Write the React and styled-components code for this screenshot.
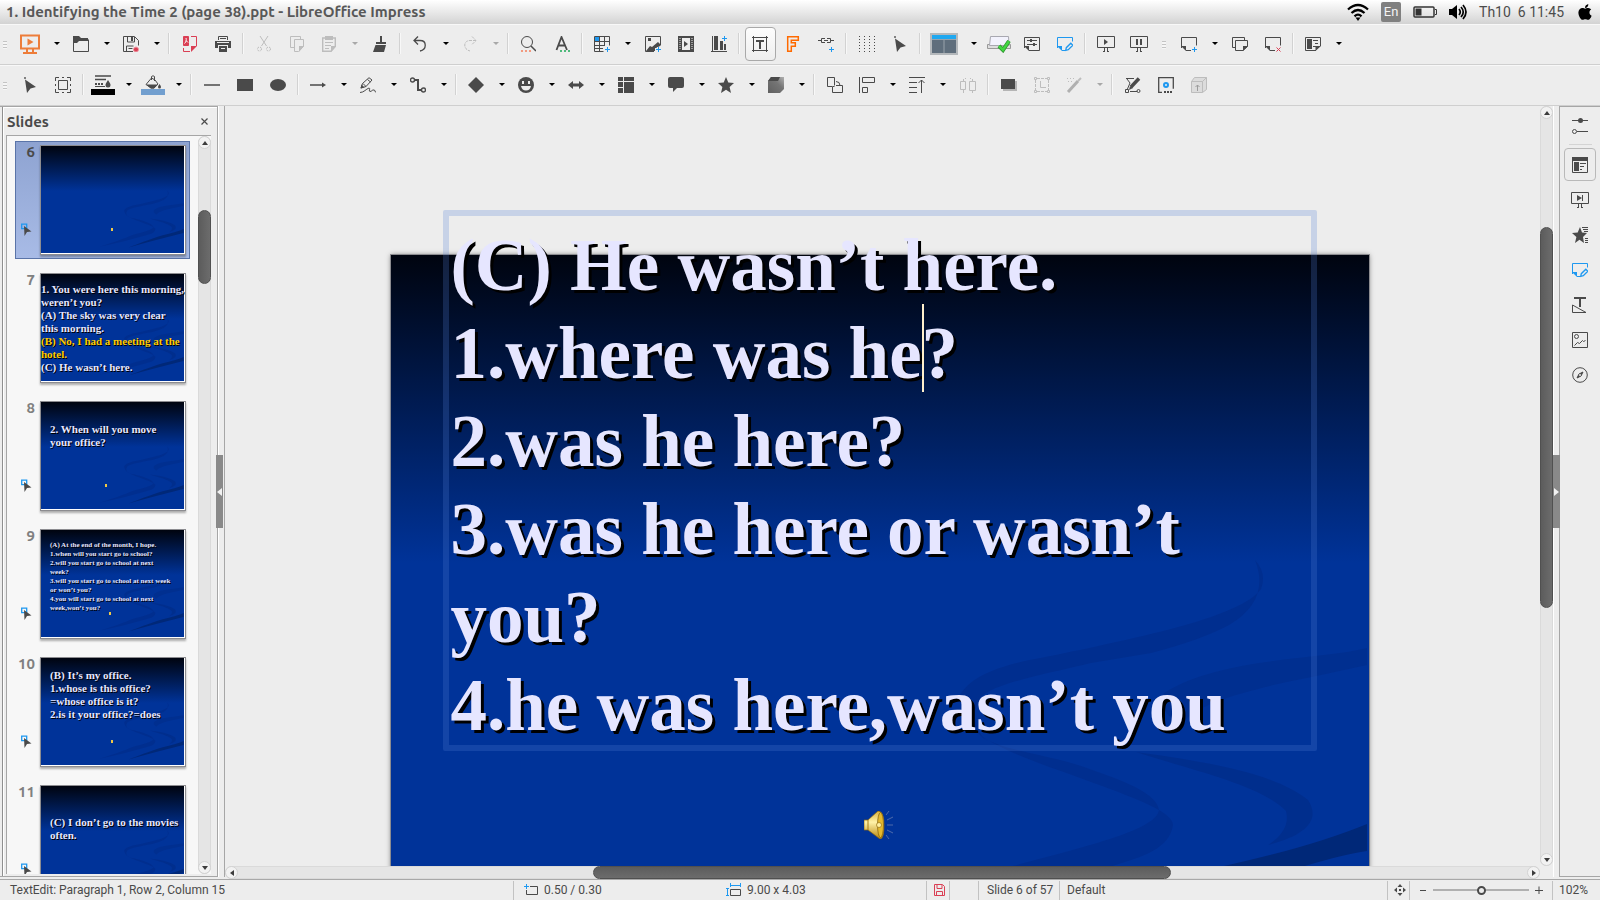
import React from 'react';
import styled, { createGlobalStyle, css } from 'styled-components';
import { FaApple } from 'react-icons/fa';

const D = '#4a4a4a';
const B = '#1e98f0';
const G = '#bdbdbd';
const UI = '"Ubuntu", "Noto Sans", "Open Sans", sans-serif';
const NARROW = '"Ubuntu Condensed", "Roboto", sans-serif';

const Global = createGlobalStyle`
  * { box-sizing: border-box; }
  body { margin: 0; background: #ededed; font-family: ${UI}; color: ${D}; overflow: hidden; }
  button { font: inherit; color: inherit; background: none; border: 0; padding: 0; margin: 0; }
`;

const Window = styled.div`
  display: flex;
  flex-direction: column;
  height: 100vh;
  background: #ededed;
`;

/* ---------- title bar ---------- */
const TitleBar = styled.header`
  display: flex;
  align-items: center;
  justify-content: space-between;
  flex: none;
  height: 24px;
  padding: 0 6px;
  background: linear-gradient(#fff, #d3d3d3);
`;
const Title = styled.h1`
  margin: 0;
  font-size: 15px;
  line-height: 24px;
  font-weight: 700;
  white-space: nowrap;
  color: #585858;
`;
const Tray = styled.div`
  display: flex;
  align-items: center;
  gap: 12px;
  color: #000;
`;
const Lang = styled.span`
  width: 20px;
  height: 20px;
  border-radius: 2px;
  background: #808080;
  color: #f4f4f4;
  font: 13px/20px ${NARROW};
  text-align: center;
`;
const Clock = styled.time`
  font: 14px/24px ${NARROW};
  color: #4c4c4c;
  white-space: pre;
`;

/* ---------- tool bars ---------- */
const Bar = styled.div`
  display: flex;
  align-items: flex-start;
  flex: none;
  height: 41px;
  padding-top: 2px;
  border-top: 1px solid #f8f8f8;
  border-bottom: 1px solid #cfcfcf;
  background: #ededed;
`;
const Grip = styled.span`
  flex: none;
  width: 4px;
  height: 8px;
  margin: 14px ${(p) => (p.$wide ? 7 : 6)}px 0 ${(p) => (p.$wide ? 7 : 3)}px;
  background: repeating-linear-gradient(#c4c4c4 0 1px, #f6f6f6 1px 3px);
`;
const Tool = styled.button`
  flex: none;
  display: flex;
  align-items: center;
  width: ${(p) => p.$w || 33}px;
  height: 34px;
  padding-left: ${(p) => p.$pad ?? 9}px;
  ${(p) =>
    p.$active &&
    css`
      width: 31px;
      margin: 0 0 0 2px;
      padding-left: 6px;
      border: 1px solid #a9a9a9;
      border-radius: 4px;
      background: linear-gradient(#fdfdfd, #eee);
    `}
`;
const Drop = styled.button`
  flex: none;
  width: 17px;
  height: 32px;
  display: flex;
  align-items: center;
  justify-content: center;
  &::after {
    content: '';
    border: 3px solid transparent;
    border-bottom: 0;
    border-top-color: ${(p) => (p.disabled ? '#a8a8a8' : '#000')};
  }
`;
const Sep = styled.span`
  flex: none;
  width: 2px;
  height: 21px;
  margin: 6px 3px 0;
  background: linear-gradient(90deg, #d2d2d2 50%, #f8f8f8 50%);
`;

const Svg = ({ w = 16, h = 16, children }) => (
  <svg width={w} height={h} viewBox={`0 0 ${w} ${h}`} fill="none" stroke={D} aria-hidden="true">
    {children}
  </svg>
);
const F = { stroke: 'none', fill: D };

const icons = {
  present: (
    <Svg w={20} h={20}>
      <g stroke="#ed7d3a">
        <path strokeWidth="2" d="M1 1.500h18v13H1z" />
        <path d="M7.500 4.500v7l6-3.500z" fill="#ed7d3a" stroke="none" />
        <path strokeWidth="2" d="M7 15v3M13 15v3M3 19h14" />
      </g>
    </Svg>
  ),
  open: (
    <Svg>
      <path {...F} d="M0 0h6l2 2h7v3H6L4 7H0z" />
      <path d="M.5 5v10.500h15v-12" />
    </Svg>
  ),
  save: (
    <Svg>
      <path d="M10 15.500H.5V.5h11l4 4v5M4.500 1v5h7V1M3.500 15v-5h7M5.500 12.500h4" />
      <path {...F} d="M8 1h2v4H8z" />
      <circle cx="13" cy="13.500" r="2.500" fill="#da3f54" stroke="#ee9aa5" />
    </Svg>
  ),
  pdf: (
    <Svg>
      <path stroke="#da3f54" fill="#da3f54" d="M1.500.5h5v9h-5z" />
      <path stroke="#fff" d="M2.500 7.500c2-2 2-3.500 1.500-5.500M4 4.500l2 2" />
      <path stroke="#da3f54" d="M9 .5h5.500V10M1.500 12v3.500H8" />
      <path fill="#da3f54" stroke="none" d="M9 10h6l-6 6z" />
    </Svg>
  ),
  print: (
    <Svg>
      <path d="M3.500 4V.5h9V4M5 2.500h6" />
      <path {...F} d="M0 5h16v7h-3V9H3v3H0zM4 10h8v6H4z" />
      <path stroke="#ededed" d="M2 6.500h12M6 12.500h4" />
    </Svg>
  ),
  cut: (
    <Svg>
      <g stroke={G}>
        <path d="M4 0l6.500 10M12 0L5.500 10" />
        <circle cx="3.500" cy="13" r="2" strokeDasharray="2 1" />
        <circle cx="12.500" cy="13" r="2" strokeDasharray="2 1" />
      </g>
    </Svg>
  ),
  copy: (
    <Svg>
      <path stroke={G} d="M5 11.500H1.500V.5h10v3M5.500 3.500h9v7l-5 5h-4z" />
      <path fill={G} stroke="none" d="M10 10h5l-5 6z" />
    </Svg>
  ),
  paste: (
    <Svg>
      <path stroke={G} strokeWidth="1.400" d="M1.700 2h12.600v8.500L10 15.300H1.700z" />
      <path stroke={G} d="M4 6.500h8M4 9.500h6M4 12.500h4" />
      <path fill={G} stroke="none" d="M4 0h8v4H4zM10 10h5l-5 6z" />
    </Svg>
  ),
  brush: (
    <Svg>
      <path {...F} d="M8 0h2v6H8zM4 6h10v2H4zM3.500 9h10.500l-2 7H1z" />
    </Svg>
  ),
  undo: (
    <Svg>
      <path strokeWidth="1.300" d="M6 .5L2 4.500l4 4M2 4.500h6c7 0 7 9 0 10.500" />
    </Svg>
  ),
  redo: (
    <Svg>
      <path stroke={G} strokeDasharray="3 1" d="M10 .5l4 4-4 4M14 4.500H8c-7 0-7 9 0 10.500" />
    </Svg>
  ),
  find: (
    <Svg>
      <circle cx="7" cy="6" r="5.500" />
      <path d="M11 10l5 5" strokeWidth="1.500" />
      <path stroke="#f29a80" strokeWidth="2" strokeDasharray="2 2" d="M1 15h10" />
    </Svg>
  ),
  spell: (
    <Svg>
      <path strokeWidth="1.800" d="M2.500 14L7.500 1 13 14M4 9.500h7" />
      <path stroke="#4fba7c" strokeWidth="2" strokeDasharray="2 2" d="M6 15h10" />
    </Svg>
  ),
  table: (
    <Svg>
      <path d="M.5.5h15v9M.5.5v15h9M0 5.500h16M0 9.500h10M0 12.500h9M5.500 0v16M10.500 0v10" />
      <path fill={B} stroke="none" d="M1 1h4v4H1z" />
      <path stroke={B} d="M11 13.500h5M13.500 11v5" />
    </Svg>
  ),
  image: (
    <Svg>
      <path d="M9 15.500H.5V.5h15v9" />
      <path {...F} d="M1 15l4-5 2 1 6-5 2 2v2l-4 2v3zM3 2h3v3H3z" />
      <path stroke="#ededed" strokeWidth="3" d="M10 13.500h6M13.500 11v5" />
      <path stroke={B} d="M11 13.500h5M13.500 11v5" />
    </Svg>
  ),
  film: (
    <Svg>
      <path {...F} d="M0 0h16v16H0z" />
      <path fill="#ededed" stroke="none" d="M4 2h8v12H4z" />
      <path stroke="#ededed" strokeDasharray="1 1" d="M2 2v12M14 2v12" />
      <path {...F} d="M6 5l4 3-4 3z" />
    </Svg>
  ),
  chart: (
    <Svg>
      <path {...F} d="M3 0h4v14H3zM9 5h3v9H9zM13 8h2v6h-2z" />
      <path d="M0 15.500h16M1.500 0v15" />
      <path stroke={B} d="M11 2.500h5M13.500 0v5" />
    </Svg>
  ),
  textbox: (
    <Svg>
      <path d="M0 1.500h16M0 14.500h16M1.500 0v16M14.500 0v16" />
      <path {...F} d="M4 4h8v2H9v7H7V6H4z" />
    </Svg>
  ),
  fontwork: (
    <Svg>
      <path stroke="#ff6a00" strokeWidth="1.500" d="M2.700.7h10.600v3.600H6.300v2.400h4v3.600h-4v5H2.700z" />
    </Svg>
  ),
  link: (
    <Svg>
      <path d="M0 4.500h3M13 4.500h3M7 2.500H3.500v4H7M9 2.500h3.500v4H9M6 4.500h4" />
      <path stroke={B} d="M11 13.500h5M13.500 11v5" />
    </Svg>
  ),
  grid: (
    <Svg>
      <path strokeDasharray="1 2" d="M.5 0v16M5.500 0v16M10.500 0v16M15.500 0v16" />
    </Svg>
  ),
  cursor: (
    <Svg>
      <path {...F} d="M3 2.500L14 10l-5.500 1.500L5 16z" />
      <path fill="#808080" stroke="none" d="M2 0h2v2H2z" />
    </Svg>
  ),
  view: (
    <Svg w={28} h={22}>
      <rect x="1" y="1" width="26" height="20" fill="#5f6e7c" stroke="#b4b8bb" strokeWidth="2" />
      <path fill="#1fa8f0" stroke="none" d="M2 2h24v4H2z" />
      <path stroke="#9aa3ab" d="M14 7v13M2 6.500h24" />
    </Svg>
  ),
  master: (
    <Svg w={24} h={18}>
      <path fill="#ddd" stroke="#999" d="M.5 9.500h23v4H.5z" />
      <path fill="#f2f2fc" stroke="#a8a8b0" d="M3.500 1.500h18l.5 9H2.500z" />
      <path stroke="#2c8f2c" strokeWidth="4" d="M12 11l4 4 6-9" />
      <path stroke="#41d441" strokeWidth="2.500" d="M12 11l4 4 6-9" />
    </Svg>
  ),
  props: (
    <Svg>
      <path d="M.5 12V1.500h15v13H5" />
      <path {...F} d="M0 10h5v5z" />
      <path d="M3 4.500h10M3 8.500h10" />
      <path strokeWidth="3" d="M6 4.500h2M9 8.500h2" />
    </Svg>
  ),
  edit: (
    <Svg>
      <path stroke={B} d="M.5 12V1.500h15v4M5 14.500h3" />
      <path fill={B} stroke="none" d="M0 10h5v5z" />
      <path stroke={B} strokeWidth="1.300" d="M8.700 14.300l.6-2.600 4.500-4.500 2 2-4.500 4.500z" />
    </Svg>
  ),
  show: (
    <Svg w={18}>
      <path d="M.5.5h17v11H.5zM7.500 12v3M10.500 12v3M6 15.500h2M10 15.500h2" />
      <path {...F} d="M7 3l4 3-4 3z" />
    </Svg>
  ),
  pause: (
    <Svg w={18}>
      <path d="M.5.5h17v11H.5zM7.500 12v3M10.500 12v3M6 15.500h2M10 15.500h2" />
      <path {...F} d="M6 3h2v6H6zM10 3h2v6h-2z" />
    </Svg>
  ),
  newslide: (
    <Svg>
      <path d="M.5 12V1.500h15v8M5 14.500h5" />
      <path {...F} d="M0 10h5v5z" />
      <path stroke={B} d="M11 13.500h5M13.500 11v5" />
    </Svg>
  ),
  dup: (
    <Svg>
      <path d="M4 11.500H.5v-10h12V4M3.500 4.500h12v6L11 14.500H3.500z" />
      <path {...F} d="M11 10h5l-5 5z" />
    </Svg>
  ),
  del: (
    <Svg>
      <path d="M.5 12V1.500h15v8M5 14.500h5" />
      <path {...F} d="M0 10h5v5z" />
      <path stroke="#da3f54" d="M11.500 11.500l4 4M15.500 11.500l-4 4" />
    </Svg>
  ),
  layout: (
    <Svg>
      <path d="M11 14.500H.5v-13h15V10M8 4.500h5M10 7.500h3M8 10.500h3" />
      <path {...F} d="M2 3h5v10H2zM10.500 10H16l-5.500 5z" />
    </Svg>
  ),
  select: (
    <Svg>
      <path d="M3.500 3.500h9v9h-9zM.5 4V.5H4M12 .5h3.500V4M.5 12v3.500H4M12 15.500h3.500V12M7 .5h2M7 15.500h2M.5 7v2M15.500 7v2" />
    </Svg>
  ),
  linecolor: (
    <Svg w={24} h={20}>
      <path d="M4 1h16M4 4.500h11" strokeWidth="1.300" />
      <path strokeWidth="2" strokeDasharray="2 1" d="M4 9h9" />
      <path {...F} d="M4 11h10v1H4zM17 5c2 3 2.500 4 2.500 5a2.500 2.500 0 0 1-5 0c0-1 .5-2 2.500-5z" />
      <path fill="#000" stroke="none" d="M0 14h24v6H0z" />
    </Svg>
  ),
  fillcolor: (
    <Svg w={24} h={20}>
      <path d="M10.500 5V1.500q1.500-1.500 3 0V6M10.500 3L5 9.500l5 3.500h3l4-4-3-4z" />
      <path {...F} d="M5 9.500h12l-4 4h-3zM18.500 9q1.500 2 1.500 3a1.500 1.500 0 0 1-3 0q0-1 1.500-3z" />
      <path fill="#729fcf" stroke="none" d="M0 14h24v6H0z" />
    </Svg>
  ),
  line: <Svg><path strokeWidth="1.500" d="M0 8h16" /></Svg>,
  rect: <Svg><path {...F} d="M0 2h16v12H0z" /></Svg>,
  ellipse: <Svg><ellipse {...F} cx="8" cy="8" rx="8" ry="6" /></Svg>,
  arrow: <Svg><path strokeWidth="1.500" d="M0 8h13" /><path {...F} d="M12 5.500l4 2.500-4 2.500z" /></Svg>,
  pencil: (
    <Svg>
      <path d="M1 11l1.500-4.500L9 .7 12 3 6 9.500zM3 6.500l3 3M7.500 2.500l3 2.500M0 15.500c4 0 6-3.500 9-4.500 2 0-1 3.500 1 3.500s2-2 4-1.500 0 2 2 2" />
      <path {...F} d="M.5 11.500l1-4 3 3z" />
    </Svg>
  ),
  connector: (
    <Svg>
      <path strokeWidth="2" d="M5 3h3v10h4" />
      <circle cx="2.500" cy="3" r="2" strokeWidth="1.400" /><circle cx="13.500" cy="13" r="2" strokeWidth="1.400" />
    </Svg>
  ),
  diamond: <Svg><path {...F} d="M8 0l8 8-8 8-8-8z" /></Svg>,
  smiley: (
    <Svg>
      <circle {...F} cx="8" cy="8" r="8" />
      <path fill="#ededed" stroke="none" d="M4 4h2v3H4zM10 4h2v3h-2zM3 9h10q-1 4.500-5 4.500T3 9z" />
    </Svg>
  ),
  dblarrow: <Svg><path {...F} d="M0 8l5-4v2.500h6V4l5 4-5 4V9.500H5V12z" /></Svg>,
  flow: <Svg><path {...F} d="M0 0h5v4H0zM6 0h10v4H6zM0 5h5v5H0zM6 5h10v11H6zM0 11h5v5H0z" /></Svg>,
  callout: <Svg><path {...F} d="M2 0h12q2 0 2 2v7q0 2-2 2h-5l-4 4v-4H2q-2 0-2-2V2Q0 0 2 0z" /></Svg>,
  star: <Svg><path {...F} d="M8 0l2.300 5.600 5.700.5-4.400 3.800L13 16l-5-3.300L3 16l1.400-6.100L0 6.100l5.700-.5z" /></Svg>,
  cube: (
    <Svg>
      <defs>
        <linearGradient id="cubeSide" x1="0" y1="1" x2="1" y2="0">
          <stop offset="0" stopColor="#606060" /><stop offset=".6" stopColor="#757575" /><stop offset="1" stopColor="#b0b0b0" />
        </linearGradient>
      </defs>
      <path fill="url(#cubeSide)" stroke="none" d="M0 4l3-4h13v12l-4 4H0z" />
      <path {...F} d="M0 4l3-4h9l-2 4z" />
    </Svg>
  ),
  rotate: <Svg><path d="M5 9.500H.5v-9h7v8M5.500 15.500v-6h2M9 8.500h6.500v7h-10M9 4.500q4 0 4 4" /></Svg>,
  align: <Svg><path d="M.5 0v16M3.500.5h12v5h-12zM3.500 10.500h5v5h-5z" /></Svg>,
  arrange: <Svg><path d="M0 .5h16M0 5.500h8M0 10.500h8M0 15.500h8M12.500 3v13M9.500 6l3-3 3 3" /></Svg>,
  distribute: (
    <Svg>
      <path stroke={G} d="M.5 4.500h5v8h-5zM9.500 4.500h6v9h-6zM3.500 2v2M3.500 13v3M12.500 2v2M12.500 14v2M5 1.500h1M10 1.500h1" />
    </Svg>
  ),
  shadow: <Svg><path fill="#b5b5b5" stroke="none" d="M2 4h14v10H2z" /><path {...F} d="M0 2h14v10H0z" /></Svg>,
  crop: (
    <Svg>
      <path stroke={G} strokeDasharray="3 1" d="M3 1.500h10M3 14.500h10M1.500 3v10M14.500 3v10" />
      <path stroke={G} d="M.5.500h2v2h-2zM13.500.5h2v2h-2zM.5 13.500h2v2h-2zM13.500 13.500h2v2h-2zM6.500 4v6.500H12" />
    </Svg>
  ),
  wand: (
    <Svg>
      <path stroke="#b0b0b0" strokeWidth="3" d="M2 15L12 4" />
      <path stroke={G} strokeWidth="2" d="M12 4l3-3" />
      <path stroke={G} strokeDasharray="1 2" d="M1 1.500h8M2 4.500h6" />
    </Svg>
  ),
  points: (
    <Svg>
      <path d="M1 1.500h8M2 2l3 4-3 7M5 14.500h7M.5 12.500h3v3h-3z" />
      <circle cx="13.500" cy="14" r="1.500" />
      <path strokeWidth="3.500" d="M6 10l8-8.500" />
      <path {...F} d="M4 13l1-4 3 2z" />
    </Svg>
  ),
  glue: (
    <Svg>
      <path strokeWidth="1.300" d="M4 15.300H.7V.7h14.600v11" />
      <path strokeDasharray="2 1" strokeWidth="2" d="M6 15h9" />
      <circle cx="8" cy="8" r="2" stroke={B} strokeWidth="2" />
    </Svg>
  ),
  extrude: (
    <Svg>
      <path stroke={G} fill="#dcdcdc" d="M.5 4.500l3-4h12v12l-4 3H.5zM.5 4.500h11v11M11.500 4.500l4-4" />
      <path stroke="#9c9c9c" d="M6.500 14V8M4.500 10l2-2 2 2" />
    </Svg>
  ),
  sliders: (
    <Svg>
      <path d="M0 2.500h16M5 13.500h11" />
      <circle {...F} cx="8.500" cy="2.500" r="2.500" /><circle cx="2.500" cy="13.500" r="2" />
    </Svg>
  ),
  properties: (
    <Svg>
      <path d="M.5.5h15v15H.5zM8 6.500h6M8 9.500h4M8 12.500h2" />
      <path {...F} d="M0 0h16v4H0zM2 5h5v9H2z" />
    </Svg>
  ),
  transition: (
    <Svg w={18}>
      <path d="M.5.5h17v11H.5zM7.500 12v3M10.500 12v3M6 15.500h2M10 15.500h2M11.500 3v6" />
      <path {...F} d="M6 3l5 3-5 3z" />
    </Svg>
  ),
  animation: (
    <Svg>
      <path {...F} d="M8 0l2 5.600 5 .5-4 3.800L12 16l-4.500-3.300L3 16l1.400-6.100L0 6.100l5.700-.5z" />
      <path d="M10 .5h6M11 2.500h5M12 4.500h4M13 11.500h3M13 13.500h3M13 15.500h3" />
    </Svg>
  ),
  styles: <Svg><path d="M.5 8v7.500H14z" /><path {...F} d="M2 0h12v2H9v8H7V2H2z" /></Svg>,
  gallery: (
    <Svg>
      <path d="M.5.5h15v15H.5zM2.500 13.500l3-3 2 1 3-3 1 1 2-1" />
      <circle cx="4.500" cy="4.500" r="2" />
    </Svg>
  ),
  navigator: (
    <Svg>
      <circle cx="8" cy="8" r="7.300" />
      <path d="M11 5L9 9 5 11l2-4z" fill={D} />
      <circle cx="8" cy="8" r="1" fill="#ededed" stroke="none" />
    </Svg>
  ),
};

/* ---------- panels ---------- */
const Work = styled.main`
  display: flex;
  flex: 1;
  min-height: 0;
`;
const Panel = styled.aside`
  display: flex;
  flex-direction: column;
  flex: none;
  width: 218px;
  margin-bottom: 2px;
  padding: 0 6px 2px 3px;
  border: solid #a6a6a6;
  border-width: 1px 1px 1px 0;
  box-shadow: inset 2px 0 #ededed, inset 3px 0 #8f8f8f, inset 4px 1px #fff;
`;
const PanelHead = styled.div`
  display: flex;
  align-items: center;
  justify-content: space-between;
  height: 28px;
  padding: 2px 0 0 4px;
`;
const PanelTitle = styled.h2`
  margin: 0;
  font-size: 15px;
  line-height: 20px;
`;
const Close = styled.button`
  width: 13px;
  height: 15px;
  display: flex;
  align-items: flex-start;
  justify-content: center;
  padding-top: 3px;
`;
const ListBox = styled.div`
  display: flex;
  flex: 1;
  min-height: 0;
  margin-left: 3px;
  border: solid #a6a6a6;
  border-width: 1px 0 0 1px;
  background: #f7f7f7;
`;
const List = styled.ol`
  flex: 1;
  display: flex;
  flex-direction: column;
  gap: 10px;
  min-width: 0;
  margin: 0;
  padding: 5px 8px 0;
  overflow: hidden;
  list-style: none;
`;
const Item = styled.li`
  flex: none;
  display: flex;
  height: 118px;
  padding: 3px 3px 3px 0;
  border: 1px solid ${(p) => (p.$on ? '#5a74a8' : 'transparent')};
  background: ${(p) => (p.$on ? 'linear-gradient(#8ea3d1, #a8bbe6)' : 'none')};
`;
const Gutter = styled.div`
  flex: 1;
  min-width: 0;
  display: flex;
  flex-direction: column;
  justify-content: space-between;
  align-items: flex-end;
  padding: 0 5px 19px 0;
`;
const Num = styled.span`
  font: 700 15px/14px ${UI};
  color: ${(p) => (p.$on ? '#4a4a4a' : '#808080')};
`;
const Anim = styled.span`
  align-self: flex-start;
  display: flex;
  padding-left: 5px;
`;
const Frame = styled.div`
  flex: none;
  width: 146px;
  height: 110px;
  border: 1px solid #8c8c90;
  padding: 0 1px 1px 0;
  background: #fff;
  box-shadow: 0 2px 2px rgba(0, 0, 0, 0.3);
`;
const deck = css`
  background: linear-gradient(#00040f, #003399 42%);
`;
const Mini = styled.div`
  ${deck}
  position: relative;
  height: 107px;
`;
const MiniText = styled.p`
  position: relative;
  margin: 0;
  padding: ${(p) => p.$top}px 0 0 ${(p) => p.$left}px;
  font: 700 ${(p) => (p.$small ? '7px/9px' : '11px/13px')} "Liberation Serif", serif;
  color: #e6e6ff;
  text-shadow: 1px 1px 0 #000;
  white-space: nowrap;
`;
const Line = styled.span`
  display: block;
  color: ${(p) => (p.$hot ? '#ffcc00' : 'inherit')};
`;
const Dot = styled.i`
  position: absolute;
  left: ${(p) => p.$x}px;
  top: 82px;
  width: 2px;
  height: 3px;
  background: #f0c846;
`;
const WaveSvg = styled.svg`
  position: absolute;
  inset: 0;
  width: 100%;
  height: 100%;
`;
const Waves = () => (
  <WaveSvg viewBox="0 0 978 733" preserveAspectRatio="none" aria-hidden="true">
    <g fill="#002d8c">
      <path d="M864 305Q880 345 838 370Q810 385 760 398L700 408C650 420 605 428 590 442C575 465 590 482 598 487Q574 472 569 440C585 412 640 405 665 400C750 382 850 362 870 334Q876 318 864 305z" opacity=".8" />
      <path d="M592 482C620 500 660 512 700 527C750 545 782 558 782 570C778 595 750 602 718 612L560 655L400 690Q560 640 622 611C700 590 765 575 768 555C765 535 720 522 690 511C650 498 610 495 592 482z" opacity=".8" />
      <path d="M976 393C930 405 830 402 773 438Q765 455 790 470C805 445 880 430 930 420L976 410z" opacity=".7" />
      <path d="M745 497C800 505 880 515 917 545C930 565 915 580 877 590Q900 575 895 556C870 530 800 515 745 497z" opacity=".9" />
    </g>
    <path fill="#002878" d="M976 569Q920 592 833 611C740 640 650 675 600 695Q720 660 907 613Q950 600 976 596z" />
  </WaveSvg>
);

/* ---------- scroll bars and splitters ---------- */
const Track = styled.div`
  display: flex;
  flex: none;
  flex-direction: ${(p) => (p.$h ? 'row' : 'column')};
  ${(p) => (p.$h ? 'height: 13px; margin-right: 13px;' : 'width: 13px;')}
  border-radius: 7px;
  background: #e5e5e5;
  box-shadow: inset 0 0 0 1px #dadada;
`;
const Arrow = styled.button`
  flex: none;
  width: 13px;
  height: 13px;
  border: 1px solid #d2d2d2;
  border-radius: 7px;
  background: #f2f2f2;
  display: flex;
  align-items: center;
  justify-content: center;
  &::after {
    content: '';
    border: 3px solid transparent;
    border-bottom: 4px solid #3c3c3c;
    border-top: 0;
    transform: rotate(${(p) => p.$turn}deg);
  }
`;
const Run = styled.span`
  flex: ${(p) => p.$n} 0 0;
`;
const Thumb = styled(Run)`
  border-radius: 7px;
  border: 1px solid #505050;
  background: linear-gradient(${(p) => (p.$h ? 180 : 90)}deg, #5c5c5c, #6c6c6c);
`;
const Scroll = ({ h, parts }) => (
  <Track $h={h}>
    <Arrow aria-label="Scroll back" $turn={h ? -90 : 0} />
    <Run $n={parts[0]} />
    <Thumb $h={h} $n={parts[1]} />
    <Run $n={parts[2]} />
    <Arrow aria-label="Scroll forward" $turn={h ? 90 : 180} />
  </Track>
);
const Splitter = styled.div`
  flex: none;
  display: flex;
  align-items: center;
  width: 7px;
  margin-bottom: 2px;
  border-left: 1px solid #fff;
  border-right: 1px solid #a6a6a6;
`;
const Handle = styled.button`
  && { margin-left: ${(p) => (p.$right ? -1 : -3)}px; }
  flex: none;
  width: 7px;
  height: 73px;
  display: flex;
  align-items: center;
  justify-content: center;
  background: #898989;
  &::after {
    content: '';
    border: 4px solid transparent;
    border-${(p) => (p.$right ? 'left' : 'right')}: 5px solid #f2f2f2;
    border-${(p) => (p.$right ? 'right' : 'left')}: 0;
  }
`;

/* ---------- editing canvas ---------- */
const Editor = styled.section`
  flex: 1;
  display: flex;
  flex-direction: column;
  min-width: 0;
`;
const Upper = styled.div`
  flex: 1;
  display: flex;
  min-height: 0;
`;
const Canvas = styled.div`
  flex: 1;
  min-width: 0;
  display: flex;
  justify-content: center;
  align-items: flex-start;
  padding: 149px 6px 0 0;
  overflow: hidden;
`;
const Slide = styled.div`
  ${deck}
  flex: none;
  position: relative;
  width: 978px;
  height: 733px;
  box-shadow: 0 0 0 1px #8c8c90, 0 0 5px rgba(0, 0, 0, 0.5);
`;
const TextFrame = styled.div`
  position: absolute;
  left: 52px;
  top: -45px;
  width: 874px;
  height: 541px;
  padding: 6px 0 0 2px;
  border: 6px solid rgba(82, 128, 214, 0.243);
  border-radius: 2px;
  font: 700 73px/88px "Liberation Serif", serif;
  color: #e6e6ff;
  text-shadow: 3px 3px 0 #000;
  white-space: nowrap;
`;
const Caret = styled.i`
  display: inline-block;
  width: 2px;
  height: 88px;
  margin: -6px -2px 0 0;
  vertical-align: top;
  background: #fff0cc;
`;
const Speaker = styled.svg`
  position: absolute;
  left: 473px;
  top: 556px;
`;

/* ---------- side bar ---------- */
const Side = styled.nav`
  flex: none;
  display: flex;
  flex-direction: column;
  align-items: center;
  width: 40px;
  margin-bottom: 2px;
  padding-top: 2px;
  gap: 2px;
  border: solid #a6a6a6;
  border-width: 1px 0;
`;
const SideBtn = styled.button`
  width: 32px;
  height: 33px;
  display: flex;
  align-items: center;
  justify-content: center;
  border: 1px solid ${(p) => (p.$on ? '#b9b9b9' : 'transparent')};
  border-radius: 4px;
`;
const SideRule = styled.span`
  width: 23px;
  height: 2px;
  background: linear-gradient(#d4d4d4 50%, #ededed 50%);
`;

/* ---------- status bar ---------- */
const Status = styled.footer`
  flex: none;
  display: flex;
  align-items: center;
  height: 21px;
  border-top: 1px solid #a8a8a8;
  font: 12px/20px ${NARROW};
  white-space: nowrap;
`;
const Cell = styled.div`
  display: flex;
  align-items: center;
  gap: 6px;
  flex: ${(p) => (p.$grow ? `${p.$grow} 1 ${p.$grow}px` : 'none')};
  width: ${(p) => (p.$w ? `${p.$w}px` : 'auto')};
  height: 19px;
  padding-left: ${(p) => p.$pad ?? 8}px;
  border-left: 1px solid ${(p) => (p.$bare ? 'transparent' : '#c2c2c2')};
`;
const Zoom = styled.input`
  appearance: none;
  width: 96px;
  height: 14px;
  margin: 0;
  background: linear-gradient(#b0b0b0, #b0b0b0) center / 100% 2px no-repeat;
  &::-webkit-slider-thumb {
    appearance: none;
    width: 9px;
    height: 9px;
    border: 2px solid ${D};
    border-radius: 5px;
    background: #ededed;
  }
`;

const T = (name, label, extra = {}) => ({ k: 't', name, label, ...extra });
const d = { k: 'd' };
const dOff = { k: 'd', off: true };
const s = { k: 's' };

const standard = [
  T('present', 'Templates', { w: 35, pad: 7 }), d, T('open', 'Open', { pad: 8 }), d, T('save', 'Save', { pad: 8 }), d, s,
  T('pdf', 'Export as PDF'), T('print', 'Print'), s,
  T('cut', 'Cut', { off: true }), T('copy', 'Copy', { off: true }), T('paste', 'Paste', { off: true, pad: 8 }), dOff, T('brush', 'Clone'), s,
  T('undo', 'Undo', { pad: 8 }), d, T('redo', 'Redo', { off: true, pad: 8 }), dOff, s,
  T('find', 'Find', { pad: 8 }), T('spell', 'Spelling'), s,
  T('table', 'Table', { pad: 8 }), d, T('image', 'Image'), T('film', 'Media'), T('chart', 'Chart'), s,
  T('textbox', 'Text Box', { active: true }), T('fontwork', 'Fontwork'), T('link', 'Hyperlink'), s,
  T('grid', 'Display Grid'), T('cursor', 'Helplines'), s,
  T('view', 'Display Views', { w: 41, pad: 6 }), d, T('master', 'Master Slide', { pad: 5 }), T('props', 'Master Properties'), T('edit', 'Edit Master'), s,
  T('show', 'Start from First Slide', { pad: 8 }), T('pause', 'Start from Current Slide', { pad: 8 }), { k: 'g' },
  T('newslide', 'New Slide', { pad: 8 }), d, T('dup', 'Duplicate Slide'), T('del', 'Delete Slide'), s, T('layout', 'Slide Layout', { pad: 8 }), d,
];
const drawing = [
  T('cursor', 'Select'), T('select', 'Zoom and Pan'), s,
  T('linecolor', 'Line Color', { pad: 4 }), d, T('fillcolor', 'Fill Color', { pad: 4 }), d, s,
  T('line', 'Line'), T('rect', 'Rectangle'), T('ellipse', 'Ellipse'), s,
  T('arrow', 'Lines and Arrows', { pad: 8 }), d, T('pencil', 'Curves', { pad: 8 }), d, T('connector', 'Connectors', { pad: 8 }), d, s,
  T('diamond', 'Basic Shapes', { pad: 8 }), d, T('smiley', 'Symbol Shapes', { pad: 8 }), d, T('dblarrow', 'Block Arrows', { pad: 8 }), d, T('flow', 'Flowchart', { pad: 8 }), d,
  T('callout', 'Callouts', { pad: 8 }), d, T('star', 'Stars', { pad: 8 }), d, T('cube', '3D Objects', { pad: 8 }), d, s,
  T('rotate', 'Rotate'), T('align', 'Align', { pad: 8 }), d, T('arrange', 'Arrange', { pad: 8 }), d, T('distribute', 'Distribute', { off: true }), s,
  T('shadow', 'Shadow'), T('crop', 'Crop', { off: true }), T('wand', 'Filter', { off: true, pad: 8 }), dOff, s,
  T('points', 'Points'), T('glue', 'Glue Points'), T('extrude', 'Toggle Extrusion', { off: true }),
];

const Tools = ({ items, label }) => (
  <Bar role="toolbar" aria-label={label}>
    <Grip />
    {items.map((it, i) => {
      if (it.k === 's') return <Sep key={i} />;
      if (it.k === 'g') return <Grip key={i} $wide />;
      if (it.k === 'd') return <Drop key={i} disabled={it.off} aria-label="More" />;
      return (
        <Tool key={i} $w={it.w} $pad={it.pad} $active={it.active} disabled={it.off} aria-label={it.label}>
          {icons[it.name]}
        </Tool>
      );
    })}
  </Bar>
);

const slides = [
  { n: 6, on: true, anim: true, dot: 70 },
  {
    n: 7, top: 9, left: 0,
    lines: ['1. You were here this morning,', 'weren’t you?', '(A) The sky was very clear', 'this morning.', '*(B) No, I had a meeting at the', '*hotel.', '(C) He wasn’t here.'],
  },
  { n: 8, anim: true, dot: 64, top: 21, left: 9, lines: ['2. When will you move', 'your office?'] },
  {
    n: 9, anim: true, dot: 68, top: 11, left: 9, small: true,
    lines: ['(A) At the end of the month, I hope.', '1.when will you start go to school?', '2.will you start go to school at next', 'week?', '3.will you start go to school at next week', 'or won’t you?', '4.you will start go to school at next', 'week,won’t you?'],
  },
  { n: 10, anim: true, dot: 70, top: 11, left: 9, lines: ['(B) It’s my office.', '1.whose is this office?', '=whose office is it?', '2.is it your office?=does'] },
  { n: 11, anim: true, top: 30, left: 9, lines: ['(C) I don’t go to the movies', 'often.'] },
];

const sideTabs = [
  ['properties', 'Properties'], ['transition', 'Slide Transition'], ['animation', 'Animation'], ['edit', 'Master Slides'],
  ['styles', 'Styles'], ['gallery', 'Gallery'], ['navigator', 'Navigator'],
];

export default function App() {
  return (
    <Window>
      <Global />
      <TitleBar>
        <Title>1. Identifying the Time 2 (page 38).ppt - LibreOffice Impress</Title>
        <Tray>
          <svg width="22" height="18" viewBox="0 0 22 18" fill="none" stroke="#000" strokeWidth="2.300" aria-label="Wi-Fi">
            <path d="M1 6.500Q11-2.500 21 6.500M4.500 10Q11 4 17.500 10M7.500 13.300Q11 10 14.500 13.300" />
            <path fill="#000" stroke="none" d="M8.500 14.500h5L11 18z" />
          </svg>
          <Lang>En</Lang>
          <svg width="24" height="12" viewBox="0 0 24 12" fill="none" stroke="#333" aria-label="Battery">
            <rect x="1" y="1" width="20" height="10" rx="1" strokeWidth="1.500" />
            <path fill="#333" stroke="none" d="M2.500 2.500h6v7h-6z" />
            <path d="M22 3.500h1.500v5H22" />
          </svg>
          <svg width="18" height="16" viewBox="0 0 18 16" fill="none" stroke="#000" strokeWidth="1.700" aria-label="Volume">
            <path fill="#000" stroke="none" d="M0 5h3l5-4v14l-5-4H0z" />
            <path d="M10 5q2.500 3 0 6M12 3q4.500 5 0 10M14 1q6 7 0 14" />
          </svg>
          <Clock>Th10  6 11:45</Clock>
          <FaApple size={18} aria-label="System menu" />
        </Tray>
      </TitleBar>
      <Tools items={standard} label="Standard" />
      <Tools items={drawing} label="Drawing" />

      <Work>
        <Panel>
          <PanelHead>
            <PanelTitle>Slides</PanelTitle>
            <Close aria-label="Close">
              <svg width="7" height="7" viewBox="0 0 7 7" stroke={D} strokeWidth="1.200"><path d="M.5.5l6 6M6.500.5l-6 6" /></svg>
            </Close>
          </PanelHead>
          <ListBox>
            <List>
              {slides.map((p) => (
                <Item key={p.n} $on={p.on}>
                  <Gutter>
                    <Num $on={p.on}>{p.n}</Num>
                    {p.anim && (
                      <Anim>
                        <svg width="11" height="13" viewBox="0 0 11 13" fill="none">
                          <path stroke={B} strokeWidth="1.300" d="M.7 1.200h5v4.500h-5z" />
                          <path fill={D} d="M3 3l.5 10 2.500-4 4.500-.5z" />
                        </svg>
                      </Anim>
                    )}
                  </Gutter>
                  <Frame>
                    <Mini>
                      <Waves />
                      {p.lines && (
                        <MiniText $top={p.top} $left={p.left} $small={p.small}>
                          {p.lines.map((l) => (
                            <Line key={l} $hot={l[0] === '*'}>{l.replace('*', '')}</Line>
                          ))}
                        </MiniText>
                      )}
                      {p.dot && <Dot $x={p.dot} />}
                    </Mini>
                  </Frame>
                </Item>
              ))}
            </List>
            <Scroll parts={[61, 72, 578]} />
          </ListBox>
        </Panel>
        <Splitter><Handle aria-label="Hide slide panel" /></Splitter>

        <Editor>
          <Upper>
            <Canvas>
              <Slide>
                <Waves />
                <TextFrame>
                  <Line>(C) He wasn’t here.</Line>
                  <Line>1.where was he<Caret />?</Line>
                  <Line>2.was he here?</Line>
                  <Line>3.was he here or wasn’t</Line>
                  <Line>you?</Line>
                  <Line>4.he was here,wasn’t you</Line>
                </TextFrame>
                <Speaker width="30" height="28" viewBox="0 0 30 28" aria-label="Sound">
                  <defs>
                    <linearGradient id="brass" x1="0" y1="0" x2="0" y2="1">
                      <stop offset="0" stopColor="#d9b13c" /><stop offset=".4" stopColor="#fff2a8" /><stop offset="1" stopColor="#b8860b" />
                    </linearGradient>
                  </defs>
                  <path fill="url(#brass)" stroke="#8a6510" strokeWidth=".7" d="M0 9h4L14 0q6 0 6 14t-4 14L4 19H0z" />
                  <path stroke="#a87d12" fill="none" d="M4 9v10" />
                  <ellipse cx="16.500" cy="14" rx="3" ry="12.500" fill="#e3b92e" stroke="#7d5a08" strokeWidth=".7" />
                  <circle cx="15" cy="14" r="2.500" fill="#fff0a0" stroke="#96700f" strokeWidth=".7" />
                  <path stroke="#6f82b4" strokeWidth=".7" d="M22 4l3-4M23 9l6-3M23 14h6M23 19l6 3M22 24l3 4" />
                </Speaker>
              </Slide>
            </Canvas>
            <Scroll parts={[108, 380, 245]} />
          </Upper>
          <Scroll h parts={[355, 576, 356]} />
        </Editor>

        <Splitter><Handle $right aria-label="Hide sidebar" /></Splitter>
        <Side>
          <SideBtn aria-label="Sidebar Settings">{icons.sliders}</SideBtn>
          <SideRule />
          {sideTabs.map(([name, label], i) => (
            <SideBtn key={name} $on={i === 0} aria-label={label}>{icons[name]}</SideBtn>
          ))}
        </Side>
      </Work>

      <Status>
        <Cell $grow={513} $pad={9} $bare>TextEdit: Paragraph 1, Row 2, Column 15</Cell>
        <Cell $grow={202} $pad={10}>
          <svg width="14" height="14" viewBox="0 0 14 14" fill="none" stroke={D}>
            <path d="M6 3.500h7.500v8h-11V7" /><path stroke={B} d="M0 3.500h5M2.500 1v5" />
          </svg>
          0.50 / 0.30
        </Cell>
        <Cell $grow={211} $bare $pad={10}>
          <svg width="15" height="14" viewBox="0 0 15 14" fill="none" stroke={D}>
            <path d="M4.500 6.500h10v6h-10z" /><path stroke={B} d="M5 2.500h9M4.500 0v4M14.500 0v4M0 5.500h3M0 12.500h3M1.500 5v8" />
          </svg>
          9.00 x 4.03
        </Cell>
        <Cell $w={23} $pad={7}>
          <svg width="11" height="12" viewBox="0 0 11 12" fill="none" stroke="#da3f54" aria-label="Document modified">
            <path d="M.5.5h8l2 2v9H.5zM3 1v3.500h5V1M2.500 11V7.500h6V11" />
          </svg>
        </Cell>
        <Cell $w={29} />
        <Cell $w={81}>Slide 6 of 57</Cell>
        <Cell $grow={328} $pad={7}>Default</Cell>
        <Cell $w={22} $pad={6}>
          <svg width="12" height="12" viewBox="0 0 12 12" fill={D}>
            <path d="M6 0l2.500 3h-5zM6 12l2.500-3h-5zM0 6l3-2.500v5zM12 6L9 3.500v5zM5 5h2v2H5z" />
          </svg>
        </Cell>
        <Cell $w={143} $pad={9}>
          <svg width="8" height="8" viewBox="0 0 8 8" stroke={D}><path d="M1 4.500h6" /></svg>
          <Zoom type="range" min="0" max="100" defaultValue="50" aria-label="Zoom" />
          <svg width="8" height="8" viewBox="0 0 8 8" stroke={D}><path d="M0 4.500h8M4 .5v8" /></svg>
        </Cell>
        <Cell $w={48} $pad={6}>102%</Cell>
      </Status>
    </Window>
  );
}
